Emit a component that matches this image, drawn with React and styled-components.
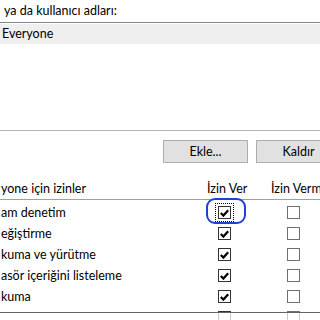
import React from 'react';
import styled, { createGlobalStyle } from 'styled-components';

const GlobalStyle = createGlobalStyle`
  html, body {
    margin: 0;
    padding: 0;
    background: #ffffff;
    overflow: hidden;
  }
  body {
    font-family: Lato, "Noto Sans", sans-serif;
    font-size: 12.5px;
    color: #000;
  }
`;

const Dialog = styled.div`
  width: 320px;
  height: 320px;
  overflow: hidden;
  background: #fff;
  position: relative;
`;

const Caption = styled.div`
  height: 22px;
  line-height: 22px;
  padding-left: 4px;
  white-space: nowrap;
`;

const UserList = styled.div`
  height: 109px;
  border-top: 1px solid #828790;
  border-bottom: 1px solid #b4b4b4;
  box-sizing: border-box;
`;

const UserRow = styled.div`
  height: 20px;
  line-height: 20px;
  padding-left: 2px;
  background: ${(p) => (p.$selected ? '#efefef' : 'transparent')};
  margin-top: 1px;
`;

const ButtonBar = styled.div`
  display: flex;
  gap: 8px;
  padding: 9px 0 0 163px;
  height: 23px;
`;

const PushButton = styled.button`
  flex: 0 0 auto;
  width: 85px;
  height: 23px;
  background: #e1e1e1;
  border: 1px solid #adadad;
  border-radius: 0;
  font: inherit;
  color: #000;
  padding: 0;
`;

const Grid = styled.div`
  display: grid;
  grid-template-columns: 207px 64px 1fr;
  align-items: center;
`;

const HeaderRow = styled(Grid)`
  height: 37px;
  align-items: end;
  border-bottom: 1px solid #a0a0a0;
  box-sizing: border-box;
  padding-bottom: 3px;
  white-space: nowrap;
`;

const HeaderCell = styled.div`
  padding-left: ${(p) => p.$indent || 0}px;
  overflow: hidden;
`;

const PermList = styled.div`
  height: 113px;
  padding-top: 2px;
  box-sizing: border-box;
  overflow: hidden;
  border-bottom: 1px solid #646464;
`;

const PermRow = styled(Grid)`
  height: 21px;
  white-space: nowrap;
`;

const PermName = styled.div`
  padding-left: 1px;
`;

const BoxCell = styled.div`
  padding-left: ${(p) => p.$indent}px;
  display: flex;
`;

const Box = styled.span`
  width: 13px;
  height: 13px;
  box-sizing: border-box;
  border: 1px solid ${(p) => (p.$checked ? '#333333' : '#707070')};
  background: #fff;
  display: flex;
  align-items: center;
  justify-content: center;
  outline: ${(p) => (p.$focused ? '1px dotted #000' : 'none')};
  outline-offset: 2px;
`;

const FadedRow = styled(Grid)`
  height: 8px;
  align-items: start;
`;

const FadedBox = styled.span`
  width: 13px;
  height: 8px;
  box-sizing: border-box;
  border: 1px solid #c8c8c8;
  border-top: none;
`;

const Highlight = styled.div`
  position: absolute;
  left: 206px;
  top: 198px;
  width: 40px;
  height: 26px;
  box-sizing: border-box;
  border: 2px solid #1f3fd6;
  border-radius: 9px;
`;

const Check = () => (
  <svg width="9" height="8" viewBox="0 0 9 8">
    <path d="M0.8 4 L3.4 6.6 L8.2 1.2" fill="none" stroke="#000" strokeWidth="2.2" />
  </svg>
);

const CheckBox = ({ checked, focused }) => (
  <Box $checked={checked} $focused={focused}>
    {checked && <Check />}
  </Box>
);

const perms = [
  'am denetim',
  'eğiştirme',
  'kuma ve yürütme',
  'asör içeriğini listeleme',
  'kuma',
  '',
];

export default function App() {
  return (
    <Dialog>
      <GlobalStyle />
      <Caption>ya da kullanıcı adları:</Caption>
      <UserList>
        <UserRow $selected>Everyone</UserRow>
      </UserList>
      <ButtonBar>
        <PushButton>Ekle...</PushButton>
        <PushButton>Kaldır</PushButton>
      </ButtonBar>
      <HeaderRow>
        <HeaderCell $indent={1}>yone için izinler</HeaderCell>
        <HeaderCell>İzin Ver</HeaderCell>
        <HeaderCell>İzin Verm</HeaderCell>
      </HeaderRow>
      <PermList>
        {perms.map((name, i) => (
          <PermRow key={i}>
            <PermName>{name}</PermName>
            <BoxCell $indent={11}>
              <CheckBox checked focused={i === 0} />
            </BoxCell>
            <BoxCell $indent={16}>
              <CheckBox />
            </BoxCell>
          </PermRow>
        ))}
      </PermList>
      <FadedRow>
        <span />
        <BoxCell $indent={11}>
          <FadedBox />
        </BoxCell>
        <BoxCell $indent={16}>
          <FadedBox />
        </BoxCell>
      </FadedRow>
      <Highlight />
    </Dialog>
  );
}
